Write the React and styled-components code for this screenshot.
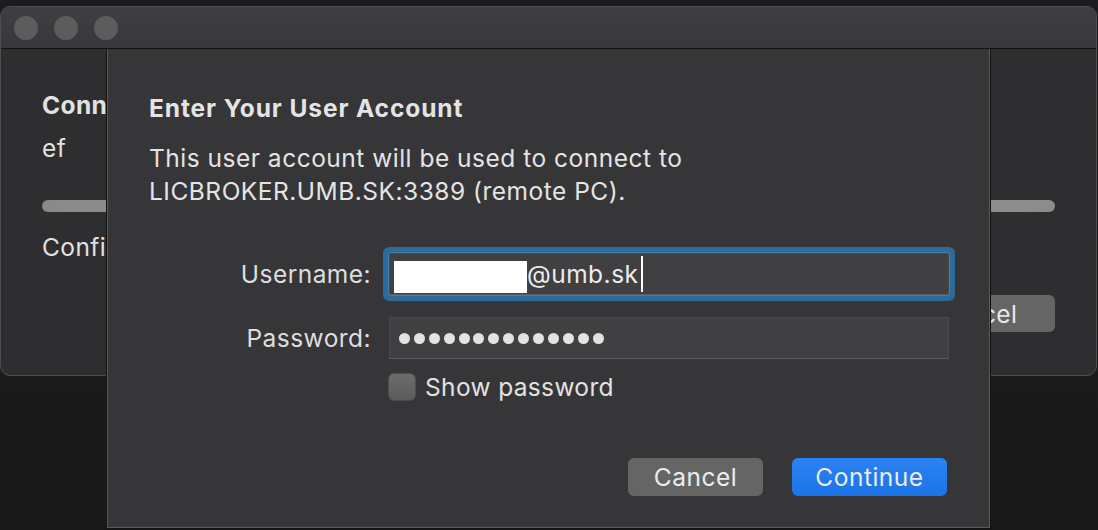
import React from "react";
import styled, { createGlobalStyle } from "styled-components";

const GlobalStyle = createGlobalStyle`
  html, body { margin: 0; padding: 0; }
  body {
    background: #1b1b1c;
    font-family: Inter, "Noto Sans", "Liberation Sans", sans-serif;
    -webkit-font-smoothing: antialiased;
  }
`;

const Stage = styled.div`
  position: relative;
  width: 1098px;
  height: 530px;
  overflow: hidden;
  padding-top: 6px;
  box-sizing: border-box;
  background: linear-gradient(180deg, #1c1c1e 0%, #19191a 100%);
`;

const Window = styled.div`
  width: 1097px;
  height: 370px;
  box-sizing: border-box;
  border-radius: 10px;
  border: 1px solid #4e4e50;
  background: #2e2e30;
  overflow: hidden;
  display: flex;
  flex-direction: column;
`;

const TitleBar = styled.div`
  height: 42px;
  flex: none;
  box-sizing: border-box;
  background: linear-gradient(180deg, #3f3f41 0%, #38383a 100%);
  border-bottom: 1px solid #111112;
  display: flex;
  align-items: center;
  gap: 16px;
  padding-left: 13px;
`;

const Light = styled.span`
  width: 24px;
  height: 24px;
  border-radius: 50%;
  background: #5c5c5e;
`;

const WindowBody = styled.div`
  flex: 1;
  padding: 41px 41px 0 41px;
  color: #e2e2e2;
  font-size: 24.5px;
  letter-spacing: 0.4px;
`;

const BackText = styled.div`
  line-height: 30px;
  white-space: nowrap;
  font-weight: ${(p) => (p.$bold ? 700 : 400)};
  margin-top: ${(p) => p.$gap || 0}px;
`;

const Progress = styled.div`
  margin-top: 37px;
  height: 12px;
  border-radius: 6px;
  background: linear-gradient(90deg, #8a8a8b 0%, #9a9a9a 50%, #8c8c8d 100%);
`;

const BackActions = styled.div`
  display: flex;
  justify-content: flex-end;
  margin-top: 33px;
`;

const BackButton = styled.div`
  width: 158px;
  height: 37px;
  border-radius: 6px;
  background: #656565;
  color: #e6e6e6;
  display: flex;
  align-items: center;
  justify-content: center;
`;

const Sheet = styled.div`
  position: absolute;
  left: 107px;
  top: 49px;
  width: 883px;
  height: 479px;
  box-sizing: border-box;
  background: #363538;
  border: 1px solid #5b5b5d;
  border-top: none;
  box-shadow: 1px 0 0 #111, -1px 0 0 #111, 0 1px 0 #111;
  padding: 45px 40px 0 41px;
  color: #e4e4e4;
  font-size: 24.5px;
  letter-spacing: 0.5px;
  display: flex;
  flex-direction: column;
`;

const SheetTitle = styled.div`
  font-weight: 700;
  line-height: 28px;
  letter-spacing: 0.9px;
`;

const Message = styled.div`
  margin-top: 20px;
  line-height: 33px;
`;

const Form = styled.div`
  margin-top: 45px;
  display: grid;
  grid-template-columns: 222px 1fr;
  column-gap: 18px;
  row-gap: 22px;
  align-items: center;
`;

const Label = styled.div`
  text-align: right;
  color: #dedede;
  letter-spacing: 0.45px;
`;

const Field = styled.div`
  height: 42px;
  box-sizing: border-box;
  background: #403f42;
  border: 1px solid #4a494c;
  border-bottom-color: #5a595c;
  display: flex;
  align-items: center;
  padding-left: ${(p) => (p.$focused ? 4 : 8)}px;
  color: #ececec;
  ${(p) =>
    p.$focused &&
    `
    border-radius: 2px;
    box-shadow: 0 0 0 1px #3e7fb0, 0 0 0 6px #2c6a9a;
  `}
`;

const Redacted = styled.span`
  width: 133px;
  height: 32px;
  background: #ffffff;
  margin-top: 6px;
`;

const Caret = styled.span`
  width: 2px;
  height: 36px;
  margin-left: 2px;
  background: #ffffff;
`;

const Dots = styled.div`
  display: flex;
  gap: 3.9px;
  padding-left: 1px;
`;

const Dot = styled.span`
  width: 11px;
  height: 11px;
  border-radius: 50%;
  background: #e3e3e3;
`;

const CheckRow = styled.label`
  grid-column: 2;
  margin-top: -9px;
  margin-left: -1px;
  display: flex;
  align-items: center;
  gap: 9px;
  color: #e2e2e2;
  letter-spacing: 0.35px;
`;

const Checkbox = styled.span`
  width: 28px;
  height: 28px;
  box-sizing: border-box;
  border-radius: 6px;
  border: 1px solid #4d4d4f;
  background: linear-gradient(180deg, #6b6b6c 0%, #5c5c5d 100%);
`;

const Actions = styled.div`
  margin-top: 56px;
  padding-right: 2px;
  display: flex;
  justify-content: flex-end;
  gap: 29px;
`;

const Button = styled.button`
  width: ${(p) => p.$w}px;
  height: 38px;
  border: none;
  border-radius: 6px;
  font-family: inherit;
  font-size: 24.5px;
  letter-spacing: 0.5px;
  color: #ececec;
  background: ${(p) =>
    p.$primary
      ? "linear-gradient(180deg, #2b82f2 0%, #1d74e8 100%)"
      : "#656565"};
  display: flex;
  align-items: center;
  justify-content: center;
  padding: 0;
`;

export default function App() {
  return (
    <>
      <GlobalStyle />
      <Stage>
        <Window>
          <TitleBar>
            <Light />
            <Light />
            <Light />
          </TitleBar>
          <WindowBody>
            <BackText $bold>Conn</BackText>
            <BackText $gap={13}>ef</BackText>
            <Progress />
            <BackText $gap={20}>Confi</BackText>
            <BackActions>
              <BackButton>Cancel</BackButton>
            </BackActions>
          </WindowBody>
        </Window>

        <Sheet>
          <SheetTitle>Enter Your User Account</SheetTitle>
          <Message>
            This user account will be used to connect to
            <br />
            LICBROKER.UMB.SK:3389 (remote PC).
          </Message>
          <Form>
            <Label>Username:</Label>
            <Field $focused>
              <Redacted />
              <span>@umb.sk</span>
              <Caret />
            </Field>
            <Label>Password:</Label>
            <Field>
              <Dots>
                {Array.from({ length: 14 }).map((_, i) => (
                  <Dot key={i} />
                ))}
              </Dots>
            </Field>
            <CheckRow>
              <Checkbox />
              Show password
            </CheckRow>
          </Form>
          <Actions>
            <Button $w={135}>Cancel</Button>
            <Button $w={155} $primary>
              Continue
            </Button>
          </Actions>
        </Sheet>
      </Stage>
    </>
  );
}
